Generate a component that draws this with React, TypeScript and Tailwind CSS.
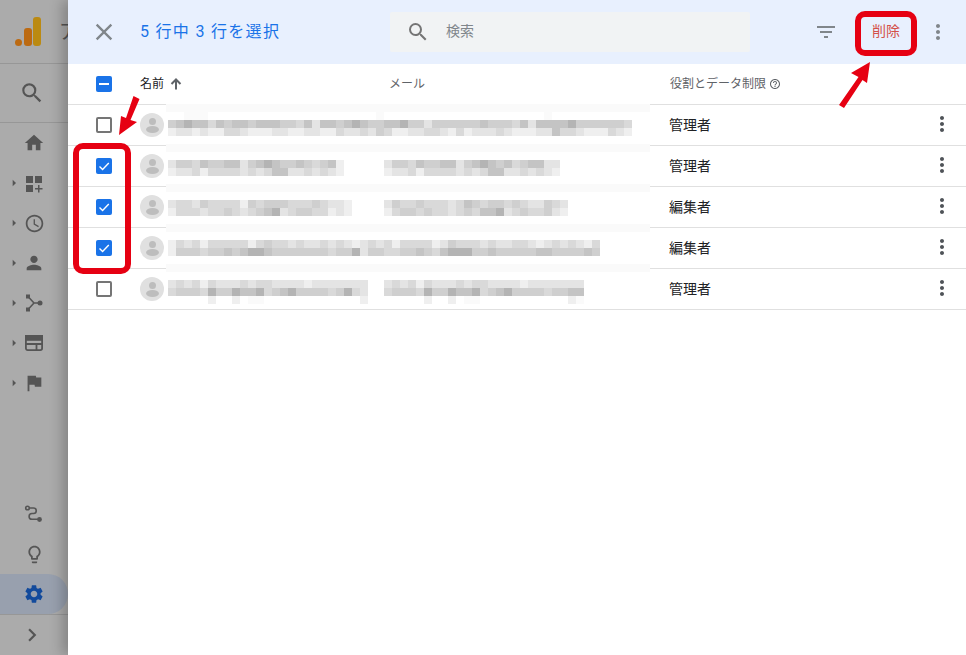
import { ReactNode } from "react";
import {
  MdAccessTime,
  MdArrowRight,
  MdChevronRight,
  MdClose,
  MdFilterList,
  MdFlag,
  MdHelpOutline,
  MdHome,
  MdMoreVert,
  MdOutlineLightbulb,
  MdPerson,
  MdSearch,
  MdSettings,
} from "react-icons/md";

const SHADES: Record<string, string> = {
  z: "#fafafa",
  a: "#efefef",
  b: "#e4e4e4",
  c: "#d9d9d9",
  d: "#cfcfcf",
  e: "#c4c4c4",
  f: "#b4b4b4",
};

function Mosaic({ lines, className }: { lines: string[]; className: string }) {
  return (
    <div className={`absolute flex flex-col ${className}`}>
      {lines.map((line, i) => (
        <div key={i} className="flex h-2">
          {line.split("").map((c, j) => (
            <span key={j} className="h-2 w-2" style={{ backgroundColor: SHADES[c] ?? "transparent" }} />
          ))}
        </div>
      ))}
    </div>
  );
}

interface Row {
  role: string;
  checked: boolean;
  band: string;
  top: string;
  name: string[];
  email?: string[];
}

const rows: Row[] = [
  {
    role: "管理者",
    checked: false,
    band: "top-[-1px]",
    top: "top-[7px]",
    name: [
      "  zzz                     z                    z",
      "defeecedeedeeeddcebeedefeddeefddbddddddedddcebeeeefddddddc",
      "abbabaaccbaaabbaabbaacbbcbdcaabbccbacabbbcbaaabbeccbaaacba",
    ],
  },
  {
    role: "管理者",
    checked: true,
    band: "top-[-2px]",
    top: "top-[14px]",
    name: ["bddceddeebdefeddedcdea", "abbcaccccbcbceebbcbcba"],
    email: ["bddceddeebdefedecdeebb", "abbcaccccbcbceebbcbcba"],
  },
  {
    role: "編集者",
    checked: true,
    band: "top-[-3px]",
    top: "top-[13px]",
    name: ["bccbdccccadcdddcccdcbba", "acccbccdcbcdefbcddccaba"],
    email: ["bdccdcccbcedcddcdcbbdcb", "acddcdccbcdceefbcdccdba"],
  },
  {
    role: "編集者",
    checked: true,
    band: "top-[-4px]",
    top: "top-[12px]",
    name: [
      "acbcacccccacdccbcbbcbcbabcbcaccccabdcccbcbbccbabcbcbac",
      "adddcddedeffedddddddcddfbddccddedcefffddedddddeedddded",
    ],
  },
  {
    role: "管理者",
    checked: false,
    band: "top-[-5px]",
    top: "top-[11px]",
    name: ["bcbcacbbbcbccbbbbabbbbbbb", "cdddcfddfeefcdefddddcdfcb", "     a  a zz            a"],
    email: ["bcbcacbbbcbccbbbbabbbbbbb", "cdddcfddfeefcdefddddcddee", "     a  a zz           az"],
  },
];

function Checkbox({ state }: { state: "off" | "on" | "mixed" }) {
  if (state === "off") {
    return <span className="h-4 w-4 rounded-[2px] border-2 border-[#757575] bg-white" />;
  }
  return (
    <span className="flex h-4 w-4 items-center justify-center rounded-[2px] bg-[#1a73e8]">
      {state === "on" ? (
        <svg width="12" height="12" viewBox="0 0 12 12" fill="none" stroke="white" strokeWidth="1.4">
          <path d="M1.5 6.5 4.6 9.6 10.8 3" />
        </svg>
      ) : (
        <span className="h-[2px] w-[10px] bg-white" />
      )}
    </span>
  );
}

function Avatar() {
  return (
    <span className="flex h-6 w-6 shrink-0 flex-col items-center justify-center rounded-full bg-[#e0e0e0]">
      <span className="h-[7px] w-[7px] rounded-full bg-[#bdbdbd]" />
      <span className="mt-[1px] h-[7px] w-[13px] rounded-[50%] bg-[#bdbdbd]" />
    </span>
  );
}

function TableRow({ row }: { row: Row }) {
  return (
    <div className="relative flex h-[41px] items-center border-b border-[#e0e0e0]">
      <div className="flex w-[72px] justify-center">
        <Checkbox state={row.checked ? "on" : "off"} />
      </div>
      <Avatar />
      <div className="ml-auto flex w-[297px] items-center pr-[12px]">
        <span className="text-[14px] text-[#202124]">{row.role}</span>
        <MdMoreVert className="mb-[2px] ml-auto text-[24px] text-[#4f5358]" />
      </div>
      {/* Blurred out names and addresses, with the light band over the row line */}
      <div className={`absolute left-[98px] h-2 w-[484px] bg-[#fafafa] ${row.band}`} />
      <Mosaic lines={row.name} className={`left-[100px] ${row.top}`} />
      {row.email && <Mosaic lines={row.email} className={`left-[316px] ${row.top}`} />}
    </div>
  );
}

function SideItem({ icon, caret }: { icon: ReactNode; caret?: boolean }) {
  return (
    <div className="relative flex h-10 shrink-0 items-center justify-center text-[#555555]">
      {caret && <MdArrowRight className="absolute left-[6px] text-[16px]" />}
      {icon}
    </div>
  );
}

export default function App() {
  return (
    <div
      className="relative flex h-[655px] w-[966px] overflow-hidden bg-white"
      style={{ fontFamily: 'Roboto, "Noto Sans CJK JP", sans-serif' }}
    >
      {/* Dimmed nav behind the drawer */}
      <aside className="flex w-[68px] shrink-0 flex-col overflow-hidden bg-[#ababab] text-[#555555]">
        <div className="flex h-[64px] shrink-0 items-center border-b border-[#979797] pl-[15px]">
          <svg width="26" height="30" viewBox="0 0 26 30" className="shrink-0">
            <circle cx="3.5" cy="25.5" r="3.5" fill="#bc6a12" />
            <rect x="9" y="11" width="8" height="18" rx="3" fill="#bc6a12" />
            <rect x="18" y="0" width="8" height="29" rx="3" fill="#bb8a12" />
          </svg>
          <span className="ml-[21px] shrink-0 -translate-x-[3px] text-[20px]">ア</span>
        </div>
        <div className="flex h-[59px] shrink-0 items-center justify-center border-b border-[#979797] pr-[4px]">
          <MdSearch className="text-[26px]" />
        </div>
        <SideItem icon={<MdHome className="text-[22px]" />} />
        <SideItem
          caret
          icon={
            <svg width="20" height="20" viewBox="0 0 20 20" fill="currentColor" className="mt-[2px]">
              <rect x="2" y="2" width="7" height="7" />
              <rect x="11" y="2" width="7" height="7" />
              <rect x="2" y="11" width="7" height="7" />
              <path d="M14 11h1.500v3H18.500v1.500H15.500v3H14v-3h-3V14h3z" />
            </svg>
          }
        />
        <SideItem caret icon={<MdAccessTime className="text-[21px]" />} />
        <SideItem caret icon={<MdPerson className="text-[22px]" />} />
        <SideItem
          caret
          icon={
            <svg width="20" height="20" viewBox="0 0 20 20" fill="none" stroke="currentColor" strokeWidth="1.6">
              <path d="M4 3.500 10 10H16M10 10 4 16.500" />
              <rect x="2" y="1.500" width="4" height="4" fill="currentColor" stroke="none" />
              <rect x="2" y="14.500" width="4" height="4" fill="currentColor" stroke="none" />
              <circle cx="16" cy="10" r="2.500" fill="currentColor" stroke="none" />
            </svg>
          }
        />
        <SideItem
          caret
          icon={
            <svg width="18" height="16" viewBox="0 0 18 16" fill="none" stroke="currentColor" strokeWidth="1.800">
              <rect x="0.900" y="0.900" width="16.200" height="14.200" rx="1.800" />
              <rect x="0.900" y="0.900" width="16.200" height="4" fill="currentColor" />
              <path d="M1 9H17M11.500 9V15" />
            </svg>
          }
        />
        <SideItem caret icon={<MdFlag className="text-[22px]" />} />
        <div className="flex-1" />
        <SideItem
          icon={
            <svg width="20" height="20" viewBox="0 0 20 20" fill="none" stroke="currentColor" strokeWidth="1.6">
              <circle cx="3.500" cy="4" r="1.800" />
              <circle cx="15.500" cy="15.500" r="2.400" fill="currentColor" stroke="none" />
              <path d="M5.300 4H9.500a2.700 2.700 0 0 1 0 5.500H8a2.800 2.800 0 0 0 0 5.800h6" />
            </svg>
          }
        />
        <SideItem icon={<MdOutlineLightbulb className="text-[21px]" />} />
        <div className="flex h-10 shrink-0 items-center justify-center rounded-r-[20px] bg-[#98a0ae] text-[#124a9c]">
          <MdSettings className="text-[22px]" />
        </div>
        <div className="flex h-[41px] shrink-0 items-center justify-center border-t border-[#979797] pr-[4px]">
          <MdChevronRight className="text-[26px]" />
        </div>
      </aside>

      {/* Drawer */}
      <main className="relative flex min-w-0 flex-1 flex-col bg-white shadow-[-6px_0_12px_rgba(0,0,0,0.22)]">
        <header className="flex h-16 shrink-0 items-center bg-[#e8f0fe]">
          <MdClose className="ml-[22px] text-[28px] text-[#80868b]" />
          <h1 className="ml-[22px] w-[250px] text-[16px] tracking-[1.3px] text-[#1a73e8]">5 行中 3 行を選択</h1>
          <div className="flex h-10 w-[360px] items-center rounded-[2px] bg-[#f1f3f4] pl-4">
            <MdSearch className="text-[24px] text-[#757575]" />
            <span className="mb-[2px] ml-4 text-[14px] text-[#80868b]">検索</span>
          </div>
          <MdFilterList className="ml-[64px] text-[24px] text-[#80868b]" />
          <span className="mb-[2px] ml-[34px] text-[14px] text-[#d4504a]">削除</span>
          <MdMoreVert className="ml-[26px] text-[24px] text-[#80868b]" />
        </header>

        <div className="flex h-[41px] shrink-0 items-center border-b border-[#e0e0e0] text-[12px]">
          <div className="flex w-[72px] justify-center">
            <Checkbox state="mixed" />
          </div>
          <span className="text-[#202124]">名前</span>
          <svg width="16" height="16" viewBox="0 0 16 16" fill="none" stroke="#5f6368" strokeWidth="2" className="mb-[1px] ml-[4px]">
            <path d="M8 13.500V3.500M3.500 8 8 3.500 12.500 8" />
          </svg>
          <span className="ml-[205px] w-[281px] text-[#5f6368]">メール</span>
          <span className="text-[#5f6368]">役割とデータ制限</span>
          <MdHelpOutline className="ml-[3px] text-[12px] text-[#5f6368]" />
        </div>

        {rows.map((row, i) => (
          <TableRow key={i} row={row} />
        ))}
      </main>

      {/* Annotations laid over the screenshot */}
      <div className="absolute left-[73px] top-[143px] h-[131px] w-[58px] rounded-[10px] border-[6px] border-[#e60012]" />
      <div className="absolute left-[855px] top-[11px] h-[45px] w-[62px] rounded-[10px] border-[6px] border-[#e60012]" />
      <svg className="absolute left-0 top-0" width="966" height="655" fill="#e60012">
        <polygon points="133.500,96 139.500,99 130.500,120 137,122 119,135 121,116 126,118" />
        <polygon points="870,62 867,83 862.500,80 844,108 839,105 858.500,77 851,73" />
      </svg>
    </div>
  );
}
